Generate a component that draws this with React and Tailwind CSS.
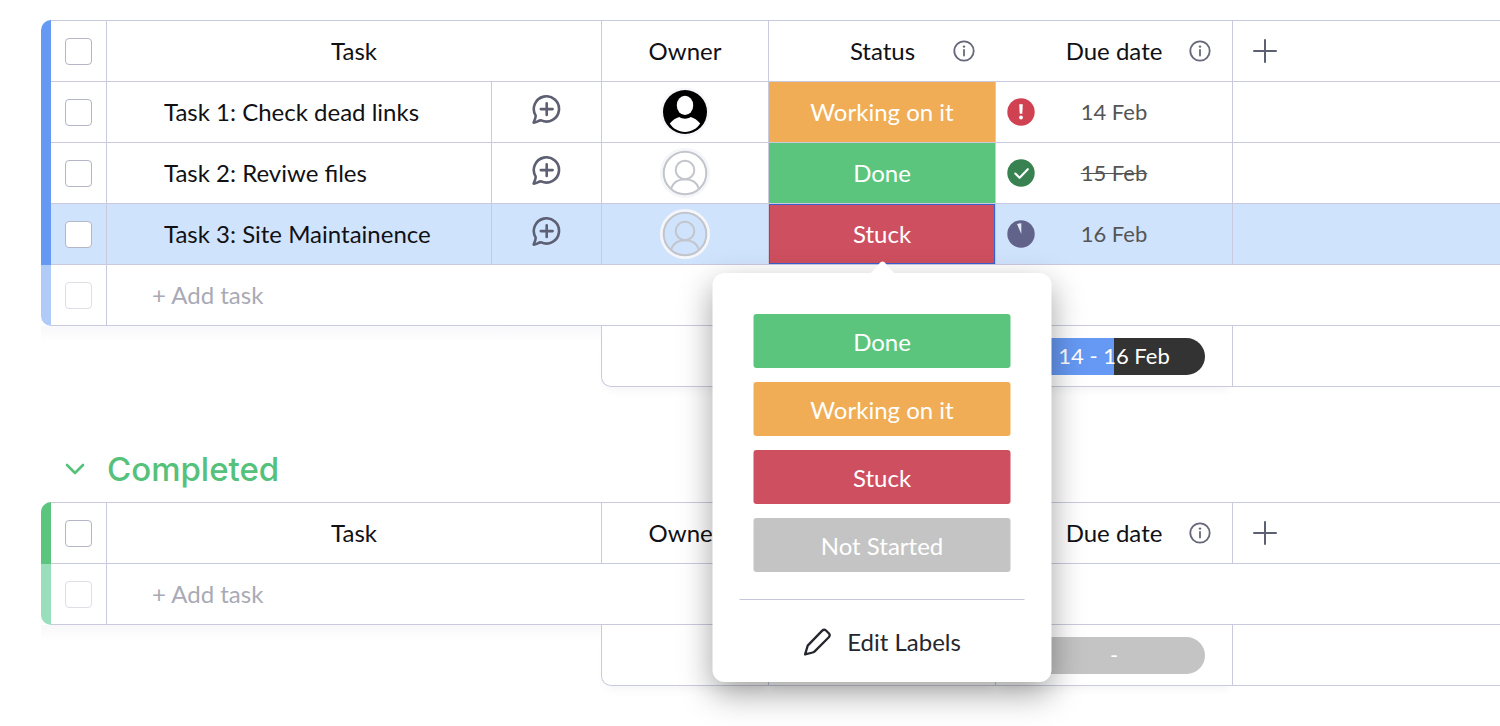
import React from "react";

const line = "border-[#c9cade]";

const STATUS = {
  done: { label: "Done", color: "bg-[#5bc57e]" },
  working: { label: "Working on it", color: "bg-[#f0ad55]" },
  stuck: { label: "Stuck", color: "bg-[#ce4f5f]" },
  none: { label: "Not Started", color: "bg-[#c4c4c4]" },
};

const TASKS = [
  { id: 1, name: "Task 1: Check dead links", owner: true, status: "working", date: "14 Feb", flag: "overdue" },
  { id: 2, name: "Task 2: Reviwe files", status: "done", date: "15 Feb", flag: "done" },
  { id: 3, name: "Task 3: Site Maintainence", status: "stuck", date: "16 Feb", flag: "pending", selected: true },
];

function Check({ label, faded }) {
  return (
    <input
      type="checkbox"
      aria-label={label}
      className={`mx-auto block size-[27px] appearance-none rounded border bg-white ${
        faded ? "border-[#dedfe6]" : "border-[#b4b5c6]"
      }`}
    />
  );
}

function InfoIcon() {
  return (
    <svg className="size-[22px]" viewBox="0 0 22 22" fill="none" stroke="#676879" strokeWidth="1.8">
      <circle cx="11" cy="11" r="9.7" />
      <path d="M11 9.800v5.800" strokeLinecap="round" />
      <circle cx="11" cy="6.600" r="1.200" fill="#676879" stroke="none" />
    </svg>
  );
}

function CommentIcon() {
  return (
    <svg
      className="h-[30px] w-[30px]"
      viewBox="0 0 30 30"
      fill="none"
      stroke="#5d5f73"
      strokeWidth="2.600"
      strokeLinecap="round"
      strokeLinejoin="round"
    >
      <path d="M9.200 25.400A12.600 12.600 0 1 0 3.600 20.400C4 21.600 3 24.400 1.700 27.600C4 28 6.300 25.200 9.200 25.400Z" />
      <path d="M14.700 8.200v11.800M8.800 14.100h11.800" />
    </svg>
  );
}

function Avatar({ filled }) {
  if (filled) {
    return (
      <svg className="mx-auto size-[50px]" viewBox="0 0 50 50" role="img" aria-label="Assigned owner">
        <circle cx="25" cy="25" r="24.500" fill="#f7f7fb" />
        <circle cx="25" cy="25" r="22" fill="#000" />
        <ellipse cx="25" cy="18.400" rx="8.200" ry="9.600" fill="#fff" />
        <path d="M9.800 36.600C12.500 33 16 31 19.300 30C22.500 32.300 27.500 32.300 30.700 30C34 31 37.500 33 40.200 36.600C37 41.800 31.500 44.900 25 44.900S13 41.800 9.800 36.600Z" fill="#fff" />
      </svg>
    );
  }
  return (
    <svg className="mx-auto size-[50px]" viewBox="0 0 50 50" fill="none" role="img" aria-label="No owner">
      <circle cx="25" cy="25" r="23.500" stroke="#f5f6fa" strokeWidth="3" />
      <g stroke="#c3c5cc" strokeWidth="2">
        <circle cx="25" cy="25" r="21.300" />
        <circle cx="25" cy="22" r="9.300" />
        <path d="M11 40.800C13 34.500 18.500 31.300 25 31.300S37 34.500 39 40.800" />
      </g>
    </svg>
  );
}

function FlagIcon({ kind }) {
  return (
    <svg className="size-7" viewBox="0 0 28 28" fill="none" role="img" aria-label={kind}>
      {kind === "overdue" && (
        <>
          <circle cx="14" cy="14" r="13.700" fill="#d04252" />
          <path d="M12.200 6.200h3.600l-.5 9.600h-2.600z" fill="#fff" />
          <circle cx="14" cy="19.500" r="1.900" fill="#fff" />
        </>
      )}
      {kind === "done" && (
        <>
          <circle cx="14" cy="14" r="13.700" fill="#388252" />
          <path d="M8.300 14.600l4.300 4.200 8.200-8.600" stroke="#fff" strokeWidth="2.100" strokeLinecap="round" strokeLinejoin="round" />
        </>
      )}
      {kind === "pending" && (
        <>
          <circle cx="14" cy="14" r="13.700" fill="#62638a" />
          <path d="M14.300 14V3.200a11 11 0 0 0-4.300.9z" fill="#e4edfb" />
        </>
      )}
    </svg>
  );
}

function HeaderWithInfo({ children }) {
  return (
    <div className="grid grid-cols-[1fr_auto_1fr] items-center">
      <span className="col-start-2">{children}</span>
      <button type="button" aria-label={`About ${children}`} className="mr-[21px] justify-self-end">
        <InfoIcon />
      </button>
    </div>
  );
}

function LabelMenu() {
  return (
    <div className="absolute top-[69px] left-1/2 z-20 w-[339px] -translate-x-1/2 rounded-xl bg-white px-[27px] pt-[41px] pb-[18px] shadow-[0_12px_32px_rgba(0,0,0,0.36)]">
      <svg className="absolute -top-3 left-1/2 h-[13px] w-7 -translate-x-1/2" viewBox="0 0 28 13" fill="#fff">
        <path d="M0 13C4 12 10 3 12 1.200Q14-.4 16 1.200C18 3 24 12 28 13Z" />
      </svg>
      <div className="flex flex-col gap-3.5 px-3.5">
        {["done", "working", "stuck", "none"].map((key) => (
          <button
            key={key}
            type="button"
            className={`h-[54px] rounded-[3px] pt-0.5 text-white ${STATUS[key].color}`}
          >
            {STATUS[key].label}
          </button>
        ))}
      </div>
      <hr className="mt-[27px] border-[#c5c7dc]" />
      <button type="button" className="mx-auto mt-5 flex h-11 items-center gap-4 text-[#26272e]">
        <svg className="size-7" viewBox="0 0 28 28" fill="none" stroke="#26272e" strokeWidth="2.300" strokeLinejoin="round" strokeLinecap="round">
          <path d="M1.600 26.400L4.200 17.600L18.700 2.600Q20.600 .8 22.500 2.500L25.500 5.500Q27 7.200 25.300 9.200L11.200 23.400Q10.400 24.200 9.200 24.500Z" />
        </svg>
        Edit Labels
      </button>
    </div>
  );
}

function AddButton() {
  return (
    <button type="button" aria-label="Add column" className="ml-5 block">
      <svg className="size-6" viewBox="0 0 24 24" stroke="#5d5f73" strokeWidth="2" strokeLinecap="round">
        <path d="M12 1v22M1 12h22" />
      </svg>
    </button>
  );
}

function Board({ name, strip, stripLight, tasks, summary }) {
  const cell = `border-b border-r p-0 ${line}`;
  const top = `border-t border-b p-0 font-normal ${line}`;
  return (
    <table aria-label={name} className="w-full min-w-[1300px] table-fixed border-separate border-spacing-0">
      <colgroup>
        <col className="w-2.5" />
        <col className="w-14" />
        <col className="w-[385px]" />
        <col className="w-[110px]" />
        <col className="w-[167px]" />
        <col className="w-[227px]" />
        <col className="w-[237px]" />
        <col />
      </colgroup>
      <thead>
        <tr className="h-[62px]">
          <td className={`rounded-tl-[10px] p-0 ${strip}`} />
          <td className={`${top} border-r`}>
            <Check label={`Select all ${name}`} />
          </td>
          <th colSpan={2} className={`${top} border-r`}>Task</th>
          <th className={`${top} border-r`}>Owner</th>
          <th className={top}><HeaderWithInfo>Status</HeaderWithInfo></th>
          <th className={`${top} border-r`}><HeaderWithInfo>Due date</HeaderWithInfo></th>
          <td className={top}><AddButton /></td>
        </tr>
      </thead>
      <tbody>
        {tasks.map((t) => (
          <tr key={t.id} className={`h-[61px] ${t.selected ? "bg-[#d0e3fd]" : ""}`}>
            <td className={`p-0 ${strip}`} />
            <td className={cell}><Check label={`Select ${t.name}`} /></td>
            <td className={`${cell} pl-[57px]`}>{t.name}</td>
            <td className={cell}>
              <button type="button" aria-label={`Comment on ${t.name}`} className="mx-auto mb-1 block">
                <CommentIcon />
              </button>
            </td>
            <td className={cell}><Avatar filled={t.owner} /></td>
            <td className={`${cell} relative`}>
              <button
                type="button"
                className={`block h-[60px] w-full text-white ${STATUS[t.status].color} ${
                  t.selected ? "border border-[#3a5fd0]" : ""
                }`}
              >
                {STATUS[t.status].label}
              </button>
              {t.selected && <LabelMenu />}
            </td>
            <td className={cell}>
              <div className="grid grid-cols-[1fr_auto_1fr] items-center">
                <span className="ml-[11px]"><FlagIcon kind={t.flag} /></span>
                <span className={`text-[22px] text-[#555555] ${t.flag === "done" ? "line-through decoration-1" : ""}`}>{t.date}</span>
              </div>
            </td>
            <td className={`border-b p-0 ${line}`} />
          </tr>
        ))}
        <tr className="h-[61px]">
          <td className={`rounded-bl-[10px] p-0 ${stripLight}`} />
          <td className={cell}><Check label="Select new task" faded /></td>
          <td colSpan={6} className={`border-b p-0 pl-[45px] ${line}`}>
            <button type="button" className="text-[#a9aab5]">+ Add task</button>
          </td>
        </tr>
        <tr className="h-[61px]">
          <td colSpan={4} className="p-0 align-top">
            <div className="h-4 bg-linear-to-b from-[#f8f8fa] to-white" />
          </td>
          <td className="p-0">
            <div className={`-ml-px h-[61px] rounded-bl-[10px] border-r border-b border-l shadow-[0_8px_8px_-4px_rgba(0,0,0,0.04)] ${line}`} />
          </td>
          <td className={`${cell} shadow-[0_8px_8px_-4px_rgba(0,0,0,0.04)]`} />
          <td className={`${cell} shadow-[0_8px_8px_-4px_rgba(0,0,0,0.04)]`}>
            <div className={`mx-auto flex h-[37px] w-[182px] items-center justify-center rounded-full text-[22px] text-white ${summary.color}`}>
              {summary.text}
            </div>
          </td>
          <td className={`border-b p-0 ${line}`} />
        </tr>
      </tbody>
    </table>
  );
}

export default function App() {
  return (
    <main className="min-h-screen overflow-x-auto overflow-y-hidden bg-white pt-5 pb-10 pl-[41px] font-['Lato',sans-serif] text-2xl text-[#111114]">
      <Board
        name="To-Do"
        strip="bg-[#6699f4]"
        stripLight="bg-[#b0cbf8]"
        tasks={TASKS}
        summary={{ text: "14 - 16 Feb", color: "bg-linear-to-r from-[#6699f4] from-50% to-[#333333] to-50%" }}
      />
      <h2 className="mt-14 mb-[7px] flex h-[52px] items-center gap-[22px] pl-6 font-['Inter',sans-serif] text-[33px] font-medium text-[#55c17b]">
        <button type="button" aria-label="Collapse Completed">
          <svg className="h-3 w-5" viewBox="0 0 20 12" fill="none" stroke="currentColor" strokeWidth="2.600" strokeLinecap="round" strokeLinejoin="round">
            <path d="M2 2l8 8 8-8" />
          </svg>
        </button>
        Completed
      </h2>
      <Board
        name="Completed"
        strip="bg-[#5bc57e]"
        stripLight="bg-[#99dfbb]"
        tasks={[]}
        summary={{ text: "-", color: "bg-[#c4c4c4]" }}
      />
    </main>
  );
}
